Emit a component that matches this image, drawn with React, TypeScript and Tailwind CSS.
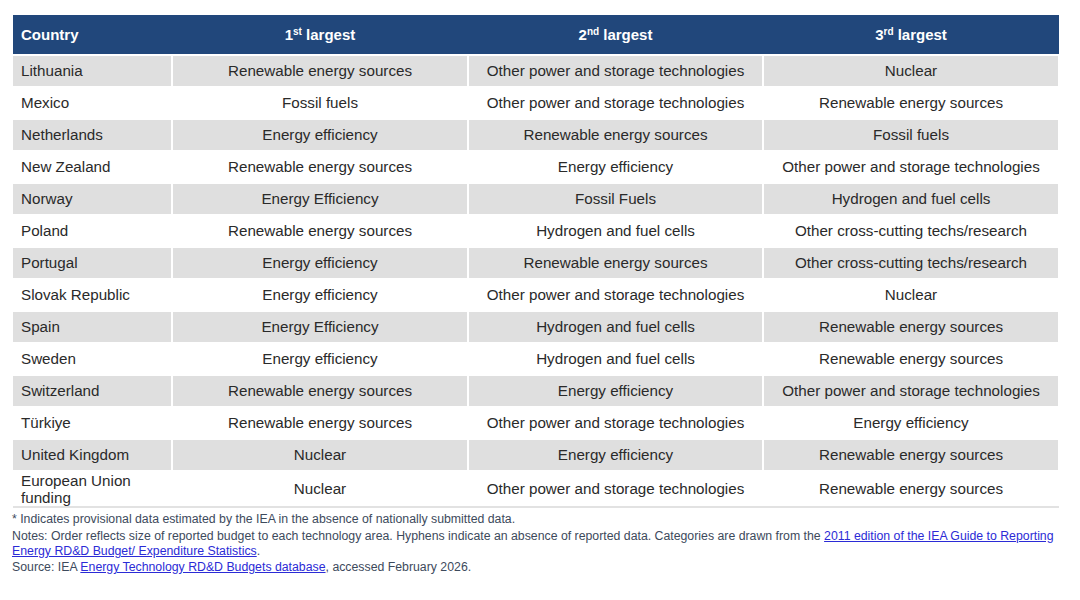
import React from 'react';

const rows: string[][] = [
  ['Lithuania', 'Renewable energy sources', 'Other power and storage technologies', 'Nuclear'],
  ['Mexico', 'Fossil fuels', 'Other power and storage technologies', 'Renewable energy sources'],
  ['Netherlands', 'Energy efficiency', 'Renewable energy sources', 'Fossil fuels'],
  ['New Zealand', 'Renewable energy sources', 'Energy efficiency', 'Other power and storage technologies'],
  ['Norway', 'Energy Efficiency', 'Fossil Fuels', 'Hydrogen and fuel cells'],
  ['Poland', 'Renewable energy sources', 'Hydrogen and fuel cells', 'Other cross-cutting techs/research'],
  ['Portugal', 'Energy efficiency', 'Renewable energy sources', 'Other cross-cutting techs/research'],
  ['Slovak Republic', 'Energy efficiency', 'Other power and storage technologies', 'Nuclear'],
  ['Spain', 'Energy Efficiency', 'Hydrogen and fuel cells', 'Renewable energy sources'],
  ['Sweden', 'Energy efficiency', 'Hydrogen and fuel cells', 'Renewable energy sources'],
  ['Switzerland', 'Renewable energy sources', 'Energy efficiency', 'Other power and storage technologies'],
  ['Türkiye', 'Renewable energy sources', 'Other power and storage technologies', 'Energy efficiency'],
  ['United Kingdom', 'Nuclear', 'Energy efficiency', 'Renewable energy sources'],
];

const cols = 'grid grid-cols-[158px_294px_293px_294px] gap-x-[2px]';

export default function App() {
  return (
    <div className="bg-white w-[1080px] h-[600px] pl-[13px] pt-[15px] font-['Liberation_Sans',Arial,sans-serif]">
      <div className="w-[1046px]">
        <div className={`${cols} h-[39px] items-center pt-px bg-[#21477b] text-white font-bold text-[15px]`}>
          <div className="pl-2">Country</div>
          <div className="text-center">1<sup className="text-[10px]">st</sup> largest</div>
          <div className="text-center">2<sup className="text-[10px]">nd</sup> largest</div>
          <div className="text-center">3<sup className="text-[10px]">rd</sup> largest</div>
        </div>
        <div className="flex flex-col gap-y-[2px] mt-[2px] text-[15.2px] text-[#2a2a2a]">
          {rows.map((r, i) => (
            <div key={r[0]} className={`${cols} h-[30px]`}>
              {r.map((c, j) => (
                <div
                  key={j}
                  className={`flex items-center pt-px ${j === 0 ? 'pl-2' : 'justify-center'} ${i % 2 === 0 ? 'bg-[#dfdfdf]' : 'bg-white'}`}
                >
                  {c}
                </div>
              ))}
            </div>
          ))}
          <div className={`${cols} h-[34px] border-b-2 border-[#e2e2e2] box-content`}>
            <div className="pl-2 leading-[17px] flex items-center">European Union<br />funding</div>
            <div className="flex items-center justify-center">Nuclear</div>
            <div className="flex items-center justify-center">Other power and storage technologies</div>
            <div className="flex items-center justify-center">Renewable energy sources</div>
          </div>
        </div>
        <div className="mt-[3px] -ml-px text-[12.3px] leading-[16px] text-[#3d4a5c] w-[1046px]">
          <p>* Indicates provisional data estimated by the IEA in the absence of nationally submitted data.</p>
          <p className="mt-[2px] leading-[15px]">
            Notes: Order reflects size of reported budget to each technology area. Hyphens indicate an absence of reported data. Categories are drawn from the{' '}
            <a href="#" className="text-[#2b2bd6] underline">2011 edition of the IEA Guide to Reporting Energy RD&amp;D Budget/ Expenditure Statistics</a>.
          </p>
          <p>
            Source: IEA <a href="#" className="text-[#2b2bd6] underline">Energy Technology RD&amp;D Budgets database</a>, accessed February 2026.
          </p>
        </div>
      </div>
    </div>
  );
}
